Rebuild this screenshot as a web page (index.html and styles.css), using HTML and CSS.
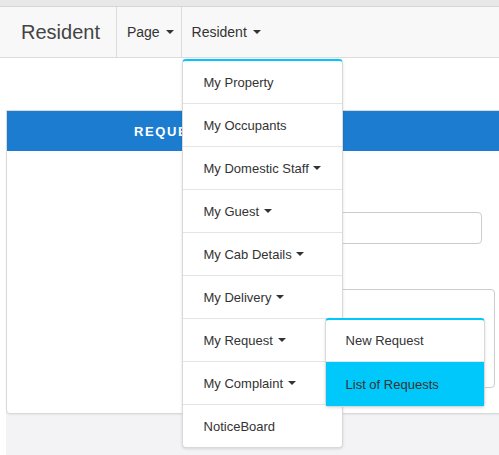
FILE: index.html
```html
<!DOCTYPE html>
<html>
<head>
<meta charset="utf-8">
<link rel="stylesheet" href="styles.css">
</head>
<body>
<div class="topstrip"></div>
<nav class="navbar">
  <a class="brand">Resident</a>
  <ul class="nav">
    <li class="nav-item"><a>Page <span class="caret"></span></a></li>
    <li class="nav-item open"><a>Resident <span class="caret"></span></a>
      <ul class="dropdown">
        <li><a>My Property</a></li>
        <li><a>My Occupants</a></li>
        <li><a>My Domestic Staff <span class="caret"></span></a></li>
        <li><a>My Guest <span class="caret"></span></a></li>
        <li><a>My Cab Details <span class="caret"></span></a></li>
        <li><a>My Delivery <span class="caret"></span></a></li>
        <li class="has-sub"><a>My Request <span class="caret"></span></a>
          <ul class="submenu">
            <li><a>New Request</a></li>
            <li class="active"><a>List of Requests</a></li>
          </ul>
        </li>
        <li><a>My Complaint <span class="caret"></span></a></li>
        <li><a>NoticeBoard</a></li>
      </ul>
    </li>
  </ul>
</nav>
<div class="spacer"></div>
<main class="content">
  <section class="panel">
    <header class="panel-head">REQUEST FORM</header>
    <div class="panel-body">
      <div class="field"><input class="input" type="text"></div>
      <div class="field"><textarea class="textarea"></textarea></div>
    </div>
  </section>
</main>
</body>
</html>
```
FILE: styles.css
```css
html, body {
  margin: 0;
  padding: 0;
  overflow: hidden;
  width: 499px;
  height: 455px;
  background: #fff;
  font-family: "Liberation Sans", Arial, sans-serif;
  color: #333;
}
ul { list-style: none; margin: 0; padding: 0; }
a { text-decoration: none; color: inherit; }

.topstrip {
  height: 6px;
  background: #e8e8e8;
  border-bottom: 1px solid #d6d6d6;
}
.navbar {
  display: flex;
  height: 50px;
  background: #f8f8f8;
  border-bottom: 1px solid #dcdcdc;
}
.brand {
  display: flex;
  align-items: center;
  padding: 0 16px 0 21px;
  font-size: 20px;
  color: #444;
}
.nav { display: flex; }
.nav-item {
  position: relative;
  border-left: 1px solid #dcdcdc;
}
.nav-item > a {
  display: flex;
  align-items: center;
  height: 50px;
  padding: 0 7px 0 10px;
  font-size: 14px;
  color: #333;
  white-space: pre;
}
.caret {
  display: inline-block;
  width: 0;
  height: 0;
  margin-left: 2px;
  border-top: 4px solid #333;
  border-left: 4px solid transparent;
  border-right: 4px solid transparent;
  vertical-align: middle;
}
.dropdown {
  position: absolute;
  top: 52px;
  left: 0;
  width: 159px;
  background: #fff;
  border: 1px solid #d9d9d9;
  border-top: 2px solid #00c8fa;
  border-radius: 4px;
  box-shadow: 0 1px 3px rgba(0,0,0,0.12);
  z-index: 10;
}
.dropdown > li {
  position: relative;
  border-bottom: 1px solid #e4e4e4;
}
.dropdown > li:last-child { border-bottom: none; }
.dropdown > li > a {
  display: flex;
  align-items: center;
  height: 42px;
  padding-left: 21px;
  font-size: 13px;
  color: #333;
  white-space: pre;
}
.dropdown .caret { margin-left: 1px; }
.submenu {
  position: absolute;
  top: -1px;
  left: 142px;
  width: 158px;
  background: #fff;
  border: 1px solid #d9d9d9;
  border-top: 2px solid #00c8fa;
  border-radius: 4px;
  box-shadow: 0 1px 3px rgba(0,0,0,0.12);
  z-index: 11;
}
.submenu li { border-bottom: 1px solid #e4e4e4; }
.submenu li:last-child { border-bottom: none; }
.submenu a {
  display: flex;
  align-items: center;
  height: 41px;
  padding-left: 20px;
  font-size: 13px;
  color: #333;
}
.submenu li.active a {
  background: #00c8fa;
  height: 44px;
}

.spacer { height: 52px; }
.content {
  margin-left: 6px;
  background: #f3f3f5;
  padding-bottom: 60px;
}
.panel {
  width: 520px;
  background: #fff;
  border: 1px solid #d9d9d9;
  border-radius: 0 0 4px 4px;
  box-shadow: 0 1px 2px rgba(0,0,0,0.06);
}
.panel-head {
  height: 40px;
  display: flex;
  align-items: center;
  padding-left: 127px;
  background: #1c7cd0;
  color: #fff;
  font-size: 13px;
  font-weight: bold;
  letter-spacing: 1.6px;
}
.panel-body {
  height: 262px;
  padding: 61px 0 0 200px;
  box-sizing: border-box;
}
.field { margin-bottom: 45px; }
.input {
  display: block;
  box-sizing: border-box;
  width: 275px;
  height: 32px;
  border: 1px solid #ccc;
  border-radius: 4px;
  margin: 0;
}
.textarea {
  display: block;
  box-sizing: border-box;
  width: 288px;
  height: 99px;
  border: 1px solid #ccc;
  border-radius: 4px;
  margin: 0;
  resize: none;
}
```
